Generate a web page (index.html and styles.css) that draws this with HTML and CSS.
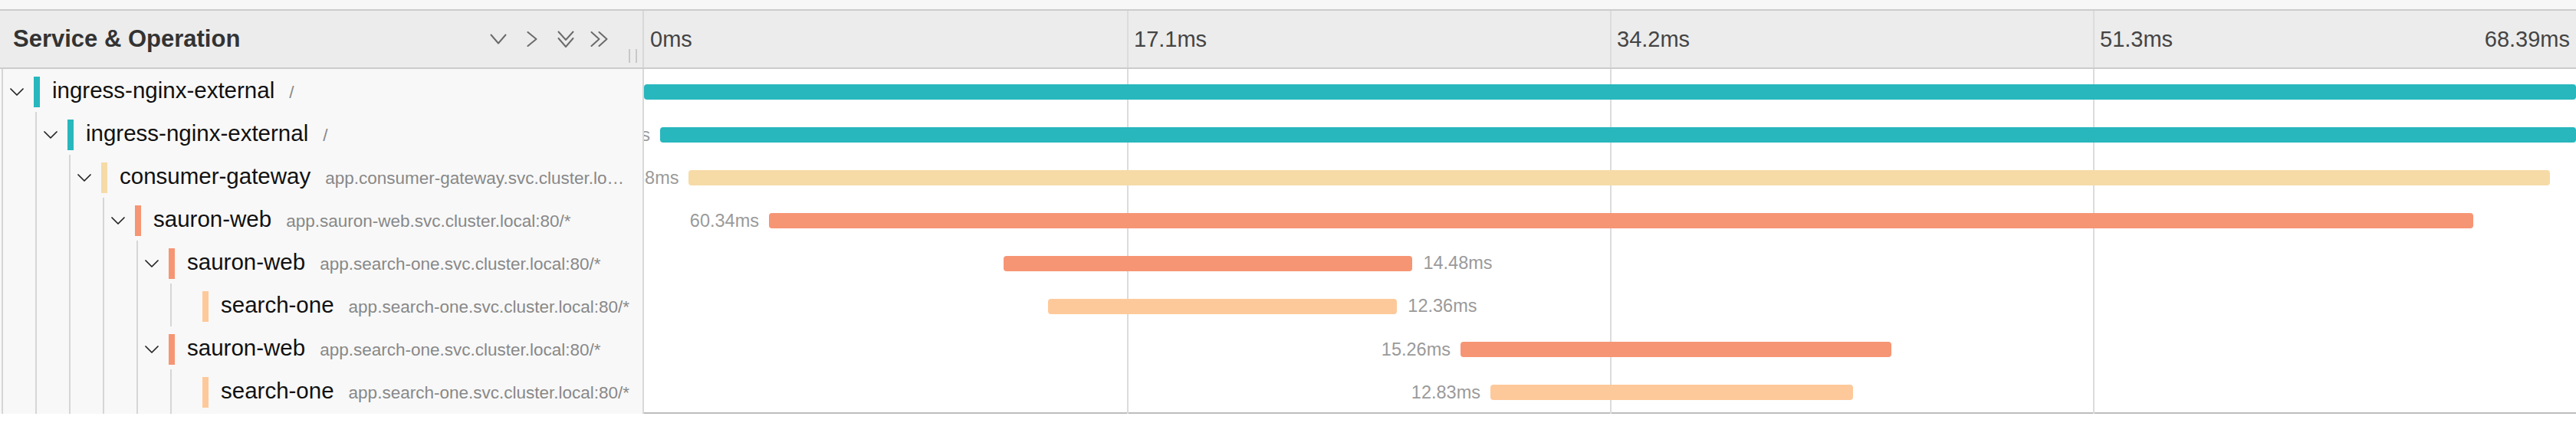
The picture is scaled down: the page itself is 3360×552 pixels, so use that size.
FILE: index.html
```html
<!DOCTYPE html>
<html>
<head>
<meta charset="utf-8">
<link rel="stylesheet" href="styles.css">
</head>
<body>
<div class="top-band"></div>
<div class="trace">
  <div class="header">
    <div class="hdr-name">
      <span class="title">Service &amp; Operation</span>
      <div class="tools">
        <svg class="ic ic-down" width="22" height="14" viewBox="0 0 22 14"><polyline points="1.5,1.5 11,12.5 20.5,1.5"/></svg>
        <svg class="ic ic-right" width="14" height="20" viewBox="0 0 14 20"><polyline points="1.5,1 12.5,10 1.5,19"/></svg>
        <svg class="ic ic-ddown" width="22" height="23" viewBox="0 0 22 23"><polyline points="1.5,1.5 11,12 20.5,1.5"/><polyline points="1.5,10 11,21 20.5,10"/></svg>
        <svg class="ic ic-dright" width="24" height="20" viewBox="0 0 24 20"><polyline points="1.5,1 11.5,10 1.5,19"/><polyline points="11.5,1 21.5,10 11.5,19"/></svg>
      </div>
      <div class="resizer"></div>
    </div>
    <div class="hdr-ticks">
      <div class="tick">0ms</div>
      <div class="tick">17.1ms</div>
      <div class="tick">34.2ms</div>
      <div class="tick tick-last"><span>51.3ms</span><span>68.39ms</span></div>
    </div>
  </div>

  <div class="rows">
    <!-- row 1 -->
    <div class="row">
      <div class="name-cell">
        <div class="toggle"><svg class="chev" width="18" height="10" viewBox="0 0 18 10"><polyline points="1,1 9,9 17,1"/></svg></div>
        <div class="swatch c-teal"></div>
        <div class="label"><span class="svc">ingress-nginx-external</span><span class="ep">/</span></div>
      </div>
      <div class="tl-cell">
        <div class="bar c-teal" style="margin-left:0%;width:100%"><span class="dur dur-left">68.39ms</span></div>
      </div>
    </div>
    <!-- row 2 -->
    <div class="row">
      <div class="name-cell">
        <div class="guide"></div>
        <div class="toggle"><svg class="chev" width="18" height="10" viewBox="0 0 18 10"><polyline points="1,1 9,9 17,1"/></svg></div>
        <div class="swatch c-teal"></div>
        <div class="label"><span class="svc">ingress-nginx-external</span><span class="ep">/</span></div>
      </div>
      <div class="tl-cell">
        <div class="bar c-teal" style="margin-left:0.833%;width:99.167%"><span class="dur dur-left">67.82ms</span></div>
      </div>
    </div>
    <!-- row 3 -->
    <div class="row">
      <div class="name-cell">
        <div class="guide"></div><div class="guide"></div>
        <div class="toggle"><svg class="chev" width="18" height="10" viewBox="0 0 18 10"><polyline points="1,1 9,9 17,1"/></svg></div>
        <div class="swatch c-beige"></div>
        <div class="label"><span class="svc">consumer-gateway</span><span class="ep">app.consumer-gateway.svc.cluster.local:80/*</span></div>
      </div>
      <div class="tl-cell">
        <div class="bar c-beige" style="margin-left:2.321%;width:96.33%"><span class="dur dur-left">65.88ms</span></div>
      </div>
    </div>
    <!-- row 4 -->
    <div class="row">
      <div class="name-cell">
        <div class="guide"></div><div class="guide"></div><div class="guide"></div>
        <div class="toggle"><svg class="chev" width="18" height="10" viewBox="0 0 18 10"><polyline points="1,1 9,9 17,1"/></svg></div>
        <div class="swatch c-salmon"></div>
        <div class="label"><span class="svc">sauron-web</span><span class="ep">app.sauron-web.svc.cluster.local:80/*</span></div>
      </div>
      <div class="tl-cell">
        <div class="bar c-salmon" style="margin-left:6.468%;width:88.23%"><span class="dur dur-left">60.34ms</span></div>
      </div>
    </div>
    <!-- row 5 -->
    <div class="row">
      <div class="name-cell">
        <div class="guide"></div><div class="guide"></div><div class="guide"></div><div class="guide"></div>
        <div class="toggle"><svg class="chev" width="18" height="10" viewBox="0 0 18 10"><polyline points="1,1 9,9 17,1"/></svg></div>
        <div class="swatch c-salmon"></div>
        <div class="label"><span class="svc">sauron-web</span><span class="ep">app.search-one.svc.cluster.local:80/*</span></div>
      </div>
      <div class="tl-cell">
        <div class="bar c-salmon" style="margin-left:18.611%;width:21.17%"></div>
        <span class="dur dur-right">14.48ms</span>
      </div>
    </div>
    <!-- row 6 -->
    <div class="row">
      <div class="name-cell">
        <div class="guide"></div><div class="guide"></div><div class="guide"></div><div class="guide"></div><div class="guide"></div>
        <div class="toggle"></div>
        <div class="swatch c-peach"></div>
        <div class="label"><span class="svc">search-one</span><span class="ep">app.search-one.svc.cluster.local:80/*</span></div>
      </div>
      <div class="tl-cell">
        <div class="bar c-peach" style="margin-left:20.913%;width:18.07%"></div>
        <span class="dur dur-right">12.36ms</span>
      </div>
    </div>
    <!-- row 7 -->
    <div class="row">
      <div class="name-cell">
        <div class="guide"></div><div class="guide"></div><div class="guide"></div><div class="guide"></div>
        <div class="toggle"><svg class="chev" width="18" height="10" viewBox="0 0 18 10"><polyline points="1,1 9,9 17,1"/></svg></div>
        <div class="swatch c-salmon"></div>
        <div class="label"><span class="svc">sauron-web</span><span class="ep">app.search-one.svc.cluster.local:80/*</span></div>
      </div>
      <div class="tl-cell">
        <div class="bar c-salmon" style="margin-left:42.262%;width:22.31%"><span class="dur dur-left">15.26ms</span></div>
      </div>
    </div>
    <!-- row 8 -->
    <div class="row">
      <div class="name-cell">
        <div class="guide"></div><div class="guide"></div><div class="guide"></div><div class="guide"></div><div class="guide"></div>
        <div class="toggle"></div>
        <div class="swatch c-peach"></div>
        <div class="label"><span class="svc">search-one</span><span class="ep">app.search-one.svc.cluster.local:80/*</span></div>
      </div>
      <div class="tl-cell">
        <div class="bar c-peach" style="margin-left:43.81%;width:18.76%"><span class="dur dur-left">12.83ms</span></div>
      </div>
    </div>
  </div>
</div>
</body>
</html>
```

FILE: styles.css
```css
html, body {
  margin: 0;
  padding: 0;
  background: #ffffff;
  font-family: "Liberation Sans", Arial, sans-serif;
}

.top-band {
  height: 12px;
  background: #f7f7f7;
}

.trace {
  border-top: 2px solid #cccccc;
  border-bottom: 2px solid #bdbdbd;
}

/* ---------- header ---------- */
.header {
  display: grid;
  grid-template-columns: 840px 1fr;
  height: 74px;
  background: #ececec;
  border-bottom: 2px solid #cccccc;
}

.hdr-name {
  display: flex;
  align-items: center;
  box-sizing: border-box;
  padding-left: 17px;
  border-right: 2px solid #d8d8d8;
}

.title {
  font-size: 31px;
  font-weight: 700;
  color: #333333;
  white-space: nowrap;
}

.tools {
  margin-left: auto;
  display: flex;
  align-items: center;
}

.ic {
  display: block;
  fill: none;
  stroke: #6b6b6b;
  stroke-width: 2;
  stroke-linecap: round;
  stroke-linejoin: round;
}

.ic-right { margin-left: 26px; }
.ic-ddown { margin-left: 26px; }
.ic-dright { margin-left: 21px; }

.resizer {
  align-self: flex-end;
  margin: 0 7px 6px 26px;
  width: 7px;
  height: 18px;
  border-left: 2px solid #c8c8c8;
  border-right: 2px solid #c8c8c8;
}

.hdr-ticks {
  display: grid;
  grid-template-columns: repeat(4, 1fr);
}

.tick {
  display: flex;
  align-items: center;
  padding-left: 7px;
  border-left: 2px solid #dcdcdc;
  font-size: 29px;
  color: #444444;
  white-space: nowrap;
}

.tick:first-child {
  border-left: none;
  padding-left: 8px;
}

.tick-last {
  justify-content: space-between;
  padding-right: 8px;
}

/* ---------- rows ---------- */
.row {
  display: grid;
  grid-template-columns: 840px 1fr;
  height: 56px;
}

.name-cell {
  display: flex;
  align-items: stretch;
  min-width: 0;
  box-sizing: border-box;
  padding-right: 16px;
  background: #f8f8f8;
  border-right: 2px solid #d8d8d8;
}

.guide,
.toggle {
  flex: 0 0 44px;
  background: linear-gradient(#d6d6d6, #d6d6d6) no-repeat 2px 0 / 2px 100%;
}

.toggle {
  display: flex;
  align-items: center;
}

.chev {
  display: block;
  margin-left: 13px;
  fill: none;
  stroke: #222222;
  stroke-width: 1.7;
  stroke-linecap: round;
  stroke-linejoin: round;
}

.swatch {
  flex: 0 0 8px;
  height: 40px;
  align-self: center;
  margin-right: 16px;
}

.label {
  flex: 1 1 auto;
  min-width: 0;
  overflow: hidden;
  white-space: nowrap;
  text-overflow: ellipsis;
  line-height: 56px;
  font-size: 22.5px;
  color: #888888;
}

.svc {
  font-size: 29.5px;
  color: #111111;
}

.ep {
  margin-left: 19px;
  font-size: 22.5px;
  color: #888888;
}

.tl-cell {
  display: flex;
  align-items: center;
  overflow: hidden;
  min-width: 0;
  background-image: linear-gradient(90deg,
    transparent 25%, #dcdcdc 25%, #dcdcdc calc(25% + 2px), transparent calc(25% + 2px),
    transparent 50%, #dcdcdc 50%, #dcdcdc calc(50% + 2px), transparent calc(50% + 2px),
    transparent 75%, #dcdcdc 75%, #dcdcdc calc(75% + 2px), transparent calc(75% + 2px));
}

.bar {
  position: relative;
  flex: 0 0 auto;
  height: 20px;
  border-radius: 4px;
}

.dur {
  font-size: 23.5px;
  color: #9a9a9a;
  white-space: nowrap;
}

.dur-left {
  position: absolute;
  right: calc(100% + 13px);
  top: 50%;
  transform: translateY(-50%);
}

.dur-right {
  margin-left: 14px;
}

.c-teal { background: #27b7bd; }
.c-beige { background: #f6dba7; }
.c-salmon { background: #f69574; }
.c-peach { background: #fec99a; }
```
